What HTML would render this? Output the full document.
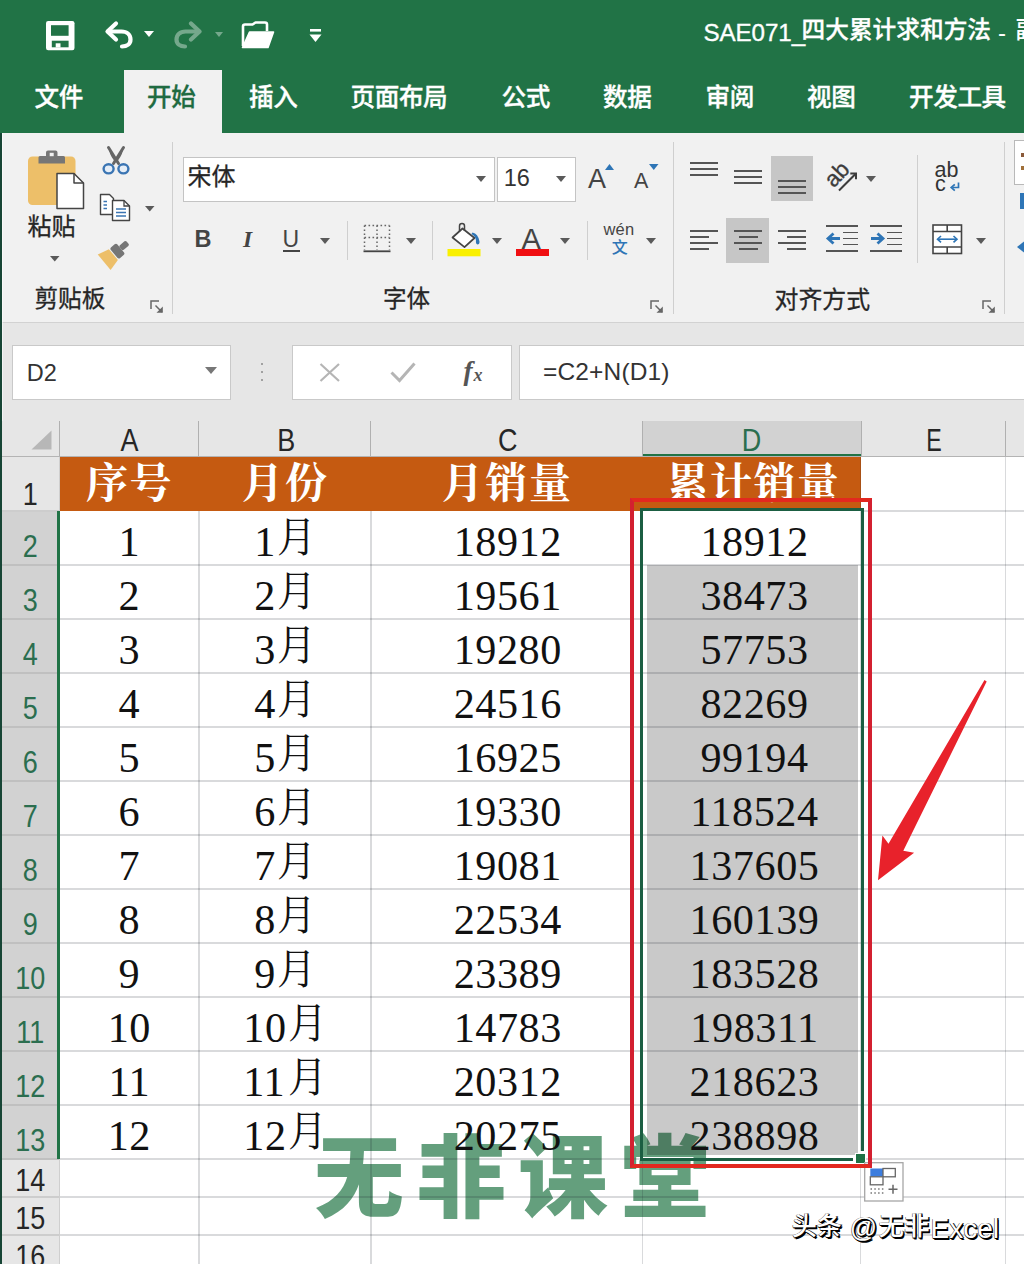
<!DOCTYPE html>
<html lang="zh-CN"><head><meta charset="utf-8"><title>SAE071_四大累计求和方法 - Excel</title>
<style>
html,body{margin:0;padding:0}
html{width:1024px;height:1264px;overflow:hidden}
body{width:1024px;height:1264px;overflow:hidden;background:#fff;font-family:"Liberation Sans",sans-serif}
#app{position:relative;width:1024px;height:1264px;overflow:hidden;background:#fff}
.b,.t,.ic,.cj,.sr{position:absolute;display:block}
.t{white-space:nowrap}
.cj,.ic{overflow:visible}
.sr{color:transparent;overflow:hidden;white-space:nowrap;font-family:"Liberation Sans",sans-serif;line-height:1;pointer-events:none}
.zs{font-family:"Liberation Sans","Noto Sans CJK SC",sans-serif}
.zf{font-family:"Liberation Serif","Noto Serif CJK SC",serif}
</style></head>
<body>
<div id="app">
<!-- title bar -->
<div class="b" style="left:0.00px;top:0.00px;width:1024.00px;height:133.00px;background:#217346;"></div>
<svg class="ic" style="left:45.80px;top:20.70px;width:28.50px;height:29.30px;" viewBox="0 0 28.5 29.3"><rect x="0" y="0" width="28.500" height="29.300" rx="2.200" fill="#fff"/><rect x="5" y="4.200" width="17.600" height="10.600" fill="#217346"/><rect x="5.800" y="19.700" width="16.800" height="6.600" fill="#217346"/><rect x="9.700" y="22.300" width="4.800" height="4.200" fill="#fff"/></svg>
<svg class="ic" style="left:103.00px;top:20.00px;width:31.00px;height:29.00px;" viewBox="0 0 31 29"><path d="M5 11.5H18.5C24 11.5 27.5 15 27.5 19.5C27.5 24 24 26.5 19 26.5" fill="none" stroke="#fff" stroke-width="4.2" stroke-linecap="round"/><path d="M13 3.5L4.5 11.5L13 19.5" fill="none" stroke="#fff" stroke-width="4.2" stroke-linecap="round" stroke-linejoin="round"/></svg>
<svg class="ic" style="left:144.00px;top:31.00px;width:10.00px;height:6.00px;" viewBox="0 0 10 6"><path d="M0 0H10 L5 6Z" fill="#fff"/></svg>
<svg class="ic" style="left:173.00px;top:20.00px;width:31.00px;height:29.00px;opacity:.38" viewBox="0 0 31 29"><path d="M26 11.5H12.5C7 11.5 3.5 15 3.5 19.5C3.5 24 7 26.5 12 26.5" fill="none" stroke="#fff" stroke-width="4.2" stroke-linecap="round"/><path d="M18 3.5L26.5 11.5L18 19.5" fill="none" stroke="#fff" stroke-width="4.2" stroke-linecap="round" stroke-linejoin="round"/></svg>
<svg class="ic" style="left:214.50px;top:31.50px;width:8.00px;height:5.00px;" viewBox="0 0 8 5"><path d="M0 0H8 L4 5Z" fill="rgba(255,255,255,.38)"/></svg>
<svg class="ic" style="left:241.00px;top:21.00px;width:34.00px;height:28.00px;" viewBox="0 0 34 28"><path d="M2 25V5.5Q2 3.5 4 3.5H11.5L14.5 1.5H24Q26 1.5 26 3.5V10" fill="none" stroke="#fff" stroke-width="2.6" stroke-linejoin="round"/><path d="M1.5 26.5L8.5 11H32.5L27 26.5Z" fill="#fff" stroke="#fff" stroke-width="1.6" stroke-linejoin="round"/></svg>
<svg class="ic" style="left:309.00px;top:28.00px;width:13.00px;height:15.00px;" viewBox="0 0 13 15"><rect x="1" y="1" width="11" height="2.6" fill="#fff"/><path d="M0.5 6.5H12.5L6.5 14Z" fill="#fff"/></svg>
<span class="t" style="left:703.50px;top:20.50px;font:normal normal 24.20px/24.20px 'Liberation Sans';color:#fff;letter-spacing:-0.10px;-webkit-text-stroke:0.350px #fff">SAE071_</span>
<span class="t zs" style="left:801.50px;top:18.70px;font-size:23.70px;line-height:23.70px;font-weight:500;color:#fff;-webkit-text-stroke:0.30px #fff">四大累计求和方法</span>
<span class="t" style="left:998.00px;top:20.50px;font:normal normal 24.00px/24.00px 'Liberation Sans';color:#fff;letter-spacing:0.00px;">-</span>
<span class="t zs" style="left:1015.50px;top:18.70px;font-size:23.70px;line-height:23.70px;font-weight:500;color:#fff">副本</span>
<!-- ribbon tabs -->
<div class="b" style="left:124.00px;top:70.00px;width:98.00px;height:64.00px;background:#f1f1f1;"></div>
<span class="t zs" style="left:34.50px;top:85.50px;font-size:24.60px;line-height:24.60px;font-weight:500;letter-spacing:-0.40px;color:#fff;-webkit-text-stroke:0.35px #fff">文件</span>
<span class="t zs" style="left:249.00px;top:85.50px;font-size:24.60px;line-height:24.60px;font-weight:500;letter-spacing:-0.40px;color:#fff;-webkit-text-stroke:0.35px #fff">插入</span>
<span class="t zs" style="left:350.50px;top:85.50px;font-size:24.60px;line-height:24.60px;font-weight:500;letter-spacing:-0.40px;color:#fff;-webkit-text-stroke:0.35px #fff">页面布局</span>
<span class="t zs" style="left:501.50px;top:85.50px;font-size:24.60px;line-height:24.60px;font-weight:500;letter-spacing:-0.40px;color:#fff;-webkit-text-stroke:0.35px #fff">公式</span>
<span class="t zs" style="left:603.00px;top:85.50px;font-size:24.60px;line-height:24.60px;font-weight:500;letter-spacing:-0.40px;color:#fff;-webkit-text-stroke:0.35px #fff">数据</span>
<span class="t zs" style="left:705.50px;top:85.50px;font-size:24.60px;line-height:24.60px;font-weight:500;letter-spacing:-0.40px;color:#fff;-webkit-text-stroke:0.35px #fff">审阅</span>
<span class="t zs" style="left:807.00px;top:85.50px;font-size:24.60px;line-height:24.60px;font-weight:500;letter-spacing:-0.40px;color:#fff;-webkit-text-stroke:0.35px #fff">视图</span>
<span class="t zs" style="left:909.00px;top:85.50px;font-size:24.60px;line-height:24.60px;font-weight:500;letter-spacing:-0.40px;color:#fff;-webkit-text-stroke:0.35px #fff">开发工具</span>
<span class="t zs" style="left:147.00px;top:85.50px;font-size:24.60px;line-height:24.60px;font-weight:500;letter-spacing:-0.40px;color:#1f6b41;-webkit-text-stroke:0.30px #1f6b41">开始</span>
<!-- ribbon -->
<div class="b" style="left:0.00px;top:133.00px;width:1024.00px;height:189.00px;background:#f1f1f1;"></div>
<div class="b" style="left:0.00px;top:321.50px;width:1024.00px;height:1.50px;background:#d2d2d2;"></div>
<div class="b" style="left:172.00px;top:142.00px;width:1.30px;height:172.00px;background:#cfcfcf;"></div>
<div class="b" style="left:673.00px;top:142.00px;width:1.30px;height:172.00px;background:#cfcfcf;"></div>
<div class="b" style="left:1004.00px;top:142.00px;width:1.30px;height:172.00px;background:#cfcfcf;"></div>
<div class="b" style="left:347.00px;top:221.00px;width:1.30px;height:39.00px;background:#cfcfcf;"></div>
<div class="b" style="left:432.00px;top:221.00px;width:1.30px;height:39.00px;background:#cfcfcf;"></div>
<div class="b" style="left:587.00px;top:221.00px;width:1.30px;height:39.00px;background:#cfcfcf;"></div>
<div class="b" style="left:916.50px;top:155.00px;width:1.30px;height:108.00px;background:#cfcfcf;"></div>
<svg class="ic" style="left:26.00px;top:148.00px;width:60.00px;height:63.00px;" viewBox="0 0 60 63"><rect x="2" y="8.5" width="47.5" height="48.5" rx="4.5" fill="#edbf69"/><path d="M12.5 15.5V9.5Q12.5 8 14 8H20V4.5Q20 2.5 22 2.5H29.5Q31.5 2.5 31.5 4.5V8H37.5Q39 8 39 9.5V15.5Z" fill="#767676"/><rect x="23.7" y="4.8" width="4" height="3.4" fill="#f1f1f1"/><path d="M31 25.5H48L57.5 35V60.5H31Z" fill="#fff" stroke="#444" stroke-width="1.5" stroke-linejoin="round"/><path d="M48 25.5V35H57.5" fill="none" stroke="#444" stroke-width="1.5" stroke-linejoin="round"/></svg>
<span class="t zs" style="left:27.50px;top:215.30px;font-size:24.00px;line-height:24.00px;font-weight:400;color:#262626;-webkit-text-stroke:0.28px #262626">粘贴</span>
<svg class="ic" style="left:50.30px;top:256.00px;width:9.50px;height:5.60px;" viewBox="0 0 9.5 5.6"><path d="M0 0H9.5 L4.75 5.6Z" fill="#5a5a5a"/></svg>
<svg class="ic" style="left:101.00px;top:145.00px;width:30.00px;height:31.00px;" viewBox="0 0 30 31"><path d="M7.5 2.5L17.5 18.5M22.5 2.5L12.5 18.5" stroke="#666" stroke-width="3" stroke-linecap="round" fill="none"/><path d="M8.2 3L15 14L21.8 3Q22.5 8 17 15.5H13Q7.5 8 8.200 3Z" fill="#666"/><ellipse cx="7.6" cy="23.8" rx="5" ry="4.6" fill="#e6eef7" stroke="#3b75b3" stroke-width="2.4"/><ellipse cx="22.4" cy="23.8" rx="5" ry="4.6" fill="#e6eef7" stroke="#3b75b3" stroke-width="2.4"/></svg>
<svg class="ic" style="left:99.00px;top:193.00px;width:33.00px;height:29.00px;" viewBox="0 0 33 29"><path d="M1.5 1.5H10.500L14.500 5.5V21.5H1.500Z" fill="#fff" stroke="#444" stroke-width="1.4" stroke-linejoin="round"/><path d="M4.5 8.5H8M4.5 12H8M4.5 15.5H8" stroke="#3b75b3" stroke-width="1.3"/><path d="M13.500 7.500H25L30.500 13V27.500H13.500Z" fill="#fff" stroke="#444" stroke-width="1.4" stroke-linejoin="round"/><path d="M25 7.5V13H30.5" fill="none" stroke="#444" stroke-width="1.3"/><path d="M17 16H27M17 19.5H27M17 23H27" stroke="#3b75b3" stroke-width="1.3"/></svg>
<svg class="ic" style="left:144.50px;top:206.00px;width:9.50px;height:5.60px;" viewBox="0 0 9.5 5.6"><path d="M0 0H9.5 L4.75 5.6Z" fill="#5a5a5a"/></svg>
<svg class="ic" style="left:100.00px;top:238.00px;width:33.00px;height:31.00px;" viewBox="0 0 33 31"><g transform="rotate(-40 16 15)"><rect x="22.500" y="11.5" width="9" height="6" rx="1.5" fill="#767676"/><rect x="14" y="7.5" width="8.500" height="14" rx="2" fill="#767676"/><path d="M13 7.5V21.5L1 24.500V4.500Z" fill="#edbf69"/></g></svg>
<span class="t zs" style="left:34.50px;top:287.70px;font-size:23.60px;line-height:23.60px;font-weight:400;color:#262626;-webkit-text-stroke:0.28px #262626">剪贴板</span>
<svg class="ic" style="left:150.00px;top:300.00px;width:14.00px;height:14.00px;" viewBox="0 0 14 14"><path d="M1 9V1H9" fill="none" stroke="#666" stroke-width="1.5"/><path d="M5.500 5.500L12 12" stroke="#666" stroke-width="1.5"/><path d="M12.800 6.500V12.800H6.500Z" fill="#666"/></svg>
<div class="b" style="left:182.50px;top:156.50px;width:312.00px;height:45.00px;background:#fff;box-sizing:border-box;border:1.3px solid #c4c4c4"></div>
<span class="t zs" style="left:187.50px;top:165.40px;font-size:24.00px;line-height:24.00px;font-weight:400;color:#262626;-webkit-text-stroke:0.28px #262626">宋体</span>
<svg class="ic" style="left:476.00px;top:176.20px;width:10.00px;height:6.00px;" viewBox="0 0 10 6"><path d="M0 0H10 L5 6Z" fill="#5a5a5a"/></svg>
<div class="b" style="left:497.00px;top:156.50px;width:78.50px;height:45.00px;background:#fff;box-sizing:border-box;border:1.3px solid #c4c4c4"></div>
<span class="t" style="left:503.80px;top:166.80px;font:normal normal 23.50px/23.50px 'Liberation Sans';color:#333;letter-spacing:0.00px;">16</span>
<svg class="ic" style="left:556.00px;top:176.20px;width:10.00px;height:6.00px;" viewBox="0 0 10 6"><path d="M0 0H10 L5 6Z" fill="#5a5a5a"/></svg>
<span class="t" style="left:588.00px;top:165.50px;font:normal normal 27.00px/27.00px 'Liberation Sans';color:#444;letter-spacing:0.00px;">A</span>
<svg class="ic" style="left:604.50px;top:163.50px;width:9.00px;height:6.00px;" viewBox="0 0 9 6"><path d="M0 6H9L4.500 0Z" fill="#2e75b6"/></svg>
<span class="t" style="left:634.00px;top:170.50px;font:normal normal 21.50px/21.50px 'Liberation Sans';color:#444;letter-spacing:0.00px;">A</span>
<svg class="ic" style="left:648.50px;top:163.50px;width:9.50px;height:6.00px;" viewBox="0 0 9.5 6"><path d="M0 0H9.500L4.750 6Z" fill="#2e75b6"/></svg>
<span class="t" style="left:194.50px;top:227.50px;font:normal bold 23.50px/23.50px 'Liberation Sans';color:#444;letter-spacing:0.00px;">B</span>
<span class="t" style="left:243.00px;top:227.50px;font:italic bold 23.50px/23.50px 'Liberation Serif';color:#444;letter-spacing:0.00px;">I</span>
<span class="t" style="left:282.50px;top:227.50px;font:normal normal 23.00px/23.00px 'Liberation Sans';color:#444;letter-spacing:0.00px;">U</span>
<div class="b" style="left:282.50px;top:249.70px;width:17.00px;height:2.30px;background:#444;"></div>
<svg class="ic" style="left:320.00px;top:238.00px;width:10.00px;height:6.00px;" viewBox="0 0 10 6"><path d="M0 0H10 L5 6Z" fill="#5a5a5a"/></svg>
<svg class="ic" style="left:363.00px;top:224.00px;width:28.00px;height:29.00px;" viewBox="0 0 28 29"><path d="M1.500 1.500H26.500M1.500 13.500H26.500M1.500 1.500V26M14 1.500V26M26.500 1.500V26" stroke="#666" stroke-width="1.500" stroke-dasharray="1.600 2.400" fill="none"/><path d="M0.500 27.300H27.500" stroke="#444" stroke-width="1.800"/></svg>
<svg class="ic" style="left:406.00px;top:238.00px;width:10.00px;height:6.00px;" viewBox="0 0 10 6"><path d="M0 0H10 L5 6Z" fill="#5a5a5a"/></svg>
<svg class="ic" style="left:447.00px;top:222.00px;width:35.00px;height:36.00px;" viewBox="0 0 35 36"><rect x="0.500" y="27" width="33" height="7.300" fill="#f9f000"/><path d="M15.500 6.500L27.500 16L17.500 25.200L5.500 15.500Z" fill="#fff" stroke="#444" stroke-width="1.700" stroke-linejoin="round"/><path d="M12.500 9.500V4Q12.500 1.500 15 1.500Q17.500 1.500 17.500 4V9" fill="none" stroke="#444" stroke-width="1.500"/><path d="M25.500 10.500Q31 11.500 32.500 19.500Q32.700 22.500 30.500 22.500Q28.500 22 29 18.500Q28.500 14 24.500 12Z" fill="#2e75b6"/></svg>
<svg class="ic" style="left:492.00px;top:238.00px;width:10.00px;height:6.00px;" viewBox="0 0 10 6"><path d="M0 0H10 L5 6Z" fill="#5a5a5a"/></svg>
<span class="t" style="left:521.50px;top:224.50px;font:normal normal 29.00px/29.00px 'Liberation Sans';color:#444;letter-spacing:0.00px;">A</span>
<div class="b" style="left:516.00px;top:249.00px;width:32.50px;height:6.50px;background:#f00f12;"></div>
<svg class="ic" style="left:560.00px;top:238.00px;width:10.00px;height:6.00px;" viewBox="0 0 10 6"><path d="M0 0H10 L5 6Z" fill="#5a5a5a"/></svg>
<span class="t" style="left:603.50px;top:221.00px;font:normal normal 16.50px/16.50px 'Liberation Sans';color:#444;letter-spacing:0.20px;">wén</span>
<span class="t zs" style="left:611.80px;top:240.10px;font-size:16.00px;line-height:16.00px;font-weight:500;color:#2e75b6">文</span>
<svg class="ic" style="left:646.00px;top:238.00px;width:10.00px;height:6.00px;" viewBox="0 0 10 6"><path d="M0 0H10 L5 6Z" fill="#5a5a5a"/></svg>
<span class="t zs" style="left:383.00px;top:287.70px;font-size:23.60px;line-height:23.60px;font-weight:400;color:#262626;-webkit-text-stroke:0.28px #262626">字体</span>
<svg class="ic" style="left:650.00px;top:300.00px;width:14.00px;height:14.00px;" viewBox="0 0 14 14"><path d="M1 9V1H9" fill="none" stroke="#666" stroke-width="1.5"/><path d="M5.500 5.500L12 12" stroke="#666" stroke-width="1.5"/><path d="M12.800 6.500V12.800H6.500Z" fill="#666"/></svg>
<div class="b" style="left:690.00px;top:162.00px;width:27.50px;height:1.60px;background:#555;"></div><div class="b" style="left:690.00px;top:168.00px;width:27.50px;height:1.60px;background:#555;"></div><div class="b" style="left:690.00px;top:174.00px;width:27.50px;height:1.60px;background:#555;"></div>
<div class="b" style="left:734.00px;top:170.00px;width:28.00px;height:1.60px;background:#555;"></div><div class="b" style="left:734.00px;top:176.00px;width:28.00px;height:1.60px;background:#555;"></div><div class="b" style="left:734.00px;top:182.00px;width:28.00px;height:1.60px;background:#555;"></div>
<div class="b" style="left:770.50px;top:156.00px;width:42.50px;height:45.00px;background:#c6c6c6;"></div>
<div class="b" style="left:778.00px;top:180.00px;width:28.00px;height:1.60px;background:#555;"></div><div class="b" style="left:778.00px;top:186.00px;width:28.00px;height:1.60px;background:#555;"></div><div class="b" style="left:778.00px;top:192.00px;width:28.00px;height:1.60px;background:#555;"></div>
<svg class="ic" style="left:820.00px;top:156.00px;width:44.00px;height:40.00px;" viewBox="0 0 44 40"><text text-anchor="middle" transform="translate(17.300 18.800) rotate(-47) translate(0 6.800)" font-family="Liberation Sans" font-size="22.500" fill="#3c3c3c" stroke="#3c3c3c" stroke-width="0.350">ab</text><path d="M19 34.500L35.200 18.300" stroke="#3c3c3c" stroke-width="2" fill="none"/><path d="M30.300 17.600H36V23.300" fill="none" stroke="#3c3c3c" stroke-width="2"/></svg>
<svg class="ic" style="left:866.00px;top:176.20px;width:10.00px;height:6.00px;" viewBox="0 0 10 6"><path d="M0 0H10 L5 6Z" fill="#5a5a5a"/></svg>
<div class="b" style="left:690.00px;top:230.00px;width:27.50px;height:1.60px;background:#555;"></div><div class="b" style="left:690.00px;top:236.00px;width:19.00px;height:1.60px;background:#555;"></div><div class="b" style="left:690.00px;top:242.00px;width:27.50px;height:1.60px;background:#555;"></div><div class="b" style="left:690.00px;top:248.00px;width:19.00px;height:1.60px;background:#555;"></div>
<div class="b" style="left:726.00px;top:218.00px;width:43.00px;height:45.00px;background:#c6c6c6;"></div>
<div class="b" style="left:734.00px;top:230.00px;width:28.00px;height:1.60px;background:#555;"></div><div class="b" style="left:739.00px;top:236.00px;width:18.50px;height:1.60px;background:#555;"></div><div class="b" style="left:734.00px;top:242.00px;width:28.00px;height:1.60px;background:#555;"></div><div class="b" style="left:739.00px;top:248.00px;width:18.50px;height:1.60px;background:#555;"></div>
<div class="b" style="left:778.00px;top:230.00px;width:28.00px;height:1.60px;background:#555;"></div><div class="b" style="left:787.00px;top:236.00px;width:19.00px;height:1.60px;background:#555;"></div><div class="b" style="left:778.00px;top:242.00px;width:28.00px;height:1.60px;background:#555;"></div><div class="b" style="left:787.00px;top:248.00px;width:19.00px;height:1.60px;background:#555;"></div>
<div class="b" style="left:826.00px;top:225.40px;width:31.50px;height:1.60px;background:#555;"></div><div class="b" style="left:842.50px;top:231.70px;width:15.00px;height:1.60px;background:#555;"></div><div class="b" style="left:842.50px;top:237.80px;width:15.00px;height:1.60px;background:#555;"></div><div class="b" style="left:842.50px;top:243.90px;width:15.00px;height:1.60px;background:#555;"></div><div class="b" style="left:826.00px;top:250.20px;width:31.50px;height:1.60px;background:#555;"></div>
<svg class="ic" style="left:825.50px;top:232.00px;width:15.00px;height:13.00px;" viewBox="0 0 15 13"><path d="M14 6.500H3.500M7.500 1.500L2 6.500L7.500 11.500" fill="none" stroke="#2e75b6" stroke-width="2.800"/></svg>
<div class="b" style="left:870.00px;top:225.40px;width:32.00px;height:1.60px;background:#555;"></div><div class="b" style="left:886.50px;top:231.70px;width:15.50px;height:1.60px;background:#555;"></div><div class="b" style="left:886.50px;top:237.80px;width:15.50px;height:1.60px;background:#555;"></div><div class="b" style="left:886.50px;top:243.90px;width:15.50px;height:1.60px;background:#555;"></div><div class="b" style="left:870.00px;top:250.20px;width:32.00px;height:1.60px;background:#555;"></div>
<svg class="ic" style="left:869.50px;top:232.00px;width:15.00px;height:13.00px;" viewBox="0 0 15 13"><path d="M1 6.500H11.500M7.500 1.500L13 6.500L7.500 11.500" fill="none" stroke="#2e75b6" stroke-width="2.800"/></svg>
<span class="t zs" style="left:774.50px;top:287.70px;font-size:23.90px;line-height:23.90px;font-weight:400;color:#262626;-webkit-text-stroke:0.28px #262626">对齐方式</span>
<span class="t" style="left:934.50px;top:160.30px;font:normal normal 21.50px/21.50px 'Liberation Sans';color:#333;letter-spacing:0.00px;">ab</span>
<span class="t" style="left:935.00px;top:174.00px;font:normal normal 21.50px/21.50px 'Liberation Sans';color:#333;letter-spacing:0.00px;">c</span>
<svg class="ic" style="left:949.50px;top:181.50px;width:10.00px;height:9.50px;" viewBox="0 0 10 9.5"><path d="M8.500 0.500V5.500H2.500" fill="none" stroke="#2e75b6" stroke-width="1.700"/><path d="M4.800 2.300L1.200 5.500L4.800 8.700" fill="none" stroke="#2e75b6" stroke-width="1.700"/></svg>
<svg class="ic" style="left:931.50px;top:223.50px;width:30.50px;height:30.50px;" viewBox="0 0 30.5 30.5"><rect x="1" y="1" width="28.500" height="28.500" fill="#fff" stroke="#444" stroke-width="1.600"/><path d="M1 7.500H29.500M1 23H29.500M15.200 1V7.500M15.200 23V29.500" stroke="#444" stroke-width="1.600" fill="none"/><path d="M6 15.200H24.500" stroke="#2e75b6" stroke-width="1.600"/><path d="M9 12L5.500 15.200L9 18.400M21.500 12L25 15.200L21.500 18.400" fill="none" stroke="#2e75b6" stroke-width="1.600"/></svg>
<svg class="ic" style="left:976.00px;top:238.30px;width:10.00px;height:6.00px;" viewBox="0 0 10 6"><path d="M0 0H10 L5 6Z" fill="#5a5a5a"/></svg>
<svg class="ic" style="left:982.00px;top:300.00px;width:14.00px;height:14.00px;" viewBox="0 0 14 14"><path d="M1 9V1H9" fill="none" stroke="#666" stroke-width="1.5"/><path d="M5.500 5.500L12 12" stroke="#666" stroke-width="1.5"/><path d="M12.800 6.500V12.800H6.500Z" fill="#666"/></svg>
<div class="b" style="left:1014.00px;top:140.00px;width:14.00px;height:45.00px;background:#fff;box-sizing:border-box;border:1.300px solid #b9b9b9"></div>
<div class="b" style="left:1021.00px;top:153.00px;width:3.00px;height:4.00px;background:#8a5a3a;"></div>
<div class="b" style="left:1021.00px;top:166.00px;width:3.00px;height:4.00px;background:#a0703a;"></div>
<div class="b" style="left:1020.00px;top:193.00px;width:4.00px;height:16.00px;background:#2e75b6;"></div>
<svg class="ic" style="left:1016.00px;top:241.00px;width:8.00px;height:12.00px;" viewBox="0 0 8 12"><path d="M8 0.500L1 6L8 11.500Z" fill="#2e75b6"/></svg>
<!-- formula bar -->
<div class="b" style="left:0.00px;top:323.00px;width:1024.00px;height:98.00px;background:#e6e6e6;"></div>
<div class="b" style="left:12.00px;top:345.00px;width:219.00px;height:54.50px;background:#fff;box-sizing:border-box;border:1.300px solid #c9c9c9"></div>
<span class="t" style="left:26.80px;top:362.00px;font:normal normal 23.50px/23.50px 'Liberation Sans';color:#333;letter-spacing:0.00px;">D2</span>
<svg class="ic" style="left:205.00px;top:366.50px;width:12.00px;height:7.00px;" viewBox="0 0 12 7"><path d="M0 0H12 L6 7Z" fill="#777"/></svg>
<div class="b" style="left:260.70px;top:362.70px;width:2.70px;height:2.70px;background:#8a8a8a;border-radius:50%"></div>
<div class="b" style="left:260.70px;top:370.70px;width:2.70px;height:2.70px;background:#8a8a8a;border-radius:50%"></div>
<div class="b" style="left:260.70px;top:378.70px;width:2.70px;height:2.70px;background:#8a8a8a;border-radius:50%"></div>
<div class="b" style="left:292.00px;top:345.00px;width:219.50px;height:54.50px;background:#fff;box-sizing:border-box;border:1.300px solid #c9c9c9"></div>
<svg class="ic" style="left:319.00px;top:362.50px;width:22.00px;height:19.00px;" viewBox="0 0 22 19"><path d="M1.500 1L20 18M20 1L1.500 18" stroke="#b5b5b5" stroke-width="2.200" fill="none"/></svg>
<svg class="ic" style="left:389.50px;top:362.00px;width:26.00px;height:21.00px;" viewBox="0 0 26 21"><path d="M1.500 10.500L9.500 18.500L24.500 1.500" stroke="#b5b5b5" stroke-width="3" fill="none"/></svg>
<span class="t" style="left:463.50px;top:357.00px;font:italic bold 27.50px/27.50px 'Liberation Serif';color:#555;letter-spacing:0.00px;">f</span>
<span class="t" style="left:473.50px;top:366.00px;font:italic bold 18.00px/18.00px 'Liberation Serif';color:#555;letter-spacing:0.00px;">x</span>
<div class="b" style="left:518.50px;top:345.00px;width:520.00px;height:54.50px;background:#fff;box-sizing:border-box;border:1.300px solid #c9c9c9"></div>
<span class="t" style="left:543.00px;top:359.80px;font:normal normal 24.50px/24.50px 'Liberation Sans';color:#333;letter-spacing:0.15px;">=C2+N(D1)</span>
<div class="b" style="left:0.00px;top:133.00px;width:1.70px;height:1140.00px;background:#174535;"></div>
<div class="b" style="left:1.70px;top:133.00px;width:1.00px;height:1140.00px;background:rgba(255,255,255,.55);"></div>
<!-- column headers -->
<div class="b" style="left:2.00px;top:421.00px;width:1022.00px;height:36.00px;background:#e6e6e6;"></div>
<div class="b" style="left:642.00px;top:421.00px;width:219.00px;height:33.00px;background:#d2d2d2;"></div>
<div class="b" style="left:642.00px;top:453.50px;width:219.00px;height:3.00px;background:#217346;"></div>
<div class="b" style="left:2.00px;top:455.80px;width:1022.00px;height:1.30px;background:#b4b4b4;"></div>
<div class="b" style="left:58.50px;top:420.50px;width:1.40px;height:35.50px;background:#b0b0b0;"></div>
<div class="b" style="left:198.00px;top:420.50px;width:1.40px;height:35.50px;background:#b0b0b0;"></div>
<div class="b" style="left:370.00px;top:420.50px;width:1.40px;height:35.50px;background:#b0b0b0;"></div>
<div class="b" style="left:641.50px;top:420.50px;width:1.40px;height:35.50px;background:#b0b0b0;"></div>
<div class="b" style="left:860.50px;top:420.50px;width:1.40px;height:35.50px;background:#b0b0b0;"></div>
<div class="b" style="left:1004.50px;top:420.50px;width:1.40px;height:35.50px;background:#b0b0b0;"></div>
<svg class="ic" style="left:31.00px;top:430.00px;width:21.00px;height:20.00px;" viewBox="0 0 21 20"><path d="M20.500 0.500V19.500H0.500Z" fill="#b7b7b7"/></svg>
<span class="t" style="left:99.60px;top:429.66px;font:normal normal 27.00px/27.00px 'Liberation Sans';color:#262626;letter-spacing:0.00px;width:60px;text-align:center;transform:scale(1,1.15);transform-origin:50% 100%">A</span>
<span class="t" style="left:256.30px;top:429.66px;font:normal normal 27.00px/27.00px 'Liberation Sans';color:#262626;letter-spacing:0.00px;width:60px;text-align:center;transform:scale(1,1.15);transform-origin:50% 100%">B</span>
<span class="t" style="left:477.80px;top:429.66px;font:normal normal 27.00px/27.00px 'Liberation Sans';color:#262626;letter-spacing:0.00px;width:60px;text-align:center;transform:scale(1,1.15);transform-origin:50% 100%">C</span>
<span class="t" style="left:904.30px;top:429.66px;font:normal normal 27.00px/27.00px 'Liberation Sans';color:#262626;letter-spacing:0.00px;width:60px;text-align:center;transform:scale(0.86,1.15);transform-origin:50% 100%">E</span>
<span class="t" style="left:721.50px;top:429.66px;font:normal normal 27.00px/27.00px 'Liberation Sans';color:#2b6e4f;letter-spacing:0.00px;width:60px;text-align:center;transform:scale(1,1.15);transform-origin:50% 100%">D</span>
<!-- cells -->
<div class="b" style="left:59.00px;top:457.00px;width:965.00px;height:820.00px;background:#fff;"></div>
<div class="b" style="left:59.00px;top:457.00px;width:802.00px;height:54.00px;background:#c55a11;"></div>
<!-- watermark -->
<span class="t zs" style="left:314.00px;top:1134.00px;font-size:90px;line-height:90px;font-weight:900;letter-spacing:12px;color:#649f7d">无非课堂</span>
<div class="b" style="left:647.00px;top:564.50px;width:211.00px;height:590.00px;background:rgba(0,0,0,.212);"></div>
<div class="b" style="left:59.00px;top:564.20px;width:965.00px;height:1.40px;background:rgba(25,30,45,.165);"></div>
<div class="b" style="left:59.00px;top:618.20px;width:965.00px;height:1.40px;background:rgba(25,30,45,.165);"></div>
<div class="b" style="left:59.00px;top:672.20px;width:965.00px;height:1.40px;background:rgba(25,30,45,.165);"></div>
<div class="b" style="left:59.00px;top:726.20px;width:965.00px;height:1.40px;background:rgba(25,30,45,.165);"></div>
<div class="b" style="left:59.00px;top:780.20px;width:965.00px;height:1.40px;background:rgba(25,30,45,.165);"></div>
<div class="b" style="left:59.00px;top:834.20px;width:965.00px;height:1.40px;background:rgba(25,30,45,.165);"></div>
<div class="b" style="left:59.00px;top:888.20px;width:965.00px;height:1.40px;background:rgba(25,30,45,.165);"></div>
<div class="b" style="left:59.00px;top:942.20px;width:965.00px;height:1.40px;background:rgba(25,30,45,.165);"></div>
<div class="b" style="left:59.00px;top:996.20px;width:965.00px;height:1.40px;background:rgba(25,30,45,.165);"></div>
<div class="b" style="left:59.00px;top:1050.20px;width:965.00px;height:1.40px;background:rgba(25,30,45,.165);"></div>
<div class="b" style="left:59.00px;top:1104.20px;width:965.00px;height:1.40px;background:rgba(25,30,45,.165);"></div>
<div class="b" style="left:59.00px;top:1158.20px;width:965.00px;height:1.40px;background:rgba(25,30,45,.165);"></div>
<div class="b" style="left:59.00px;top:1196.20px;width:965.00px;height:1.40px;background:rgba(25,30,45,.165);"></div>
<div class="b" style="left:59.00px;top:1234.20px;width:965.00px;height:1.40px;background:rgba(25,30,45,.165);"></div>
<div class="b" style="left:59.00px;top:1272.20px;width:965.00px;height:1.40px;background:rgba(25,30,45,.165);"></div>
<div class="b" style="left:198.30px;top:511.00px;width:1.40px;height:760.00px;background:rgba(25,30,45,.165);"></div>
<div class="b" style="left:370.30px;top:511.00px;width:1.40px;height:760.00px;background:rgba(25,30,45,.165);"></div>
<div class="b" style="left:641.90px;top:511.00px;width:1.40px;height:760.00px;background:rgba(25,30,45,.165);"></div>
<div class="b" style="left:859.90px;top:511.00px;width:1.40px;height:760.00px;background:rgba(25,30,45,.165);"></div>
<div class="b" style="left:1004.50px;top:511.00px;width:1.40px;height:760.00px;background:rgba(25,30,45,.165);"></div>
<div class="b" style="left:859.90px;top:457.00px;width:1.40px;height:54.00px;background:rgba(25,30,45,.165);"></div>
<div class="b" style="left:1004.50px;top:457.00px;width:1.40px;height:54.00px;background:rgba(25,30,45,.165);"></div>
<div class="b" style="left:861.00px;top:510.20px;width:163.00px;height:1.40px;background:rgba(25,30,45,.165);"></div>
<!-- row headers -->
<div class="b" style="left:2.00px;top:457.00px;width:57.00px;height:820.00px;background:#e6e6e6;"></div>
<div class="b" style="left:2.00px;top:511.00px;width:57.00px;height:648.00px;background:#d2d2d2;"></div>
<div class="b" style="left:2.00px;top:510.20px;width:57.00px;height:1.40px;background:#cdcdcd;"></div>
<div class="b" style="left:2.00px;top:564.20px;width:57.00px;height:1.40px;background:#c0c0c0;"></div>
<div class="b" style="left:2.00px;top:618.20px;width:57.00px;height:1.40px;background:#c0c0c0;"></div>
<div class="b" style="left:2.00px;top:672.20px;width:57.00px;height:1.40px;background:#c0c0c0;"></div>
<div class="b" style="left:2.00px;top:726.20px;width:57.00px;height:1.40px;background:#c0c0c0;"></div>
<div class="b" style="left:2.00px;top:780.20px;width:57.00px;height:1.40px;background:#c0c0c0;"></div>
<div class="b" style="left:2.00px;top:834.20px;width:57.00px;height:1.40px;background:#c0c0c0;"></div>
<div class="b" style="left:2.00px;top:888.20px;width:57.00px;height:1.40px;background:#c0c0c0;"></div>
<div class="b" style="left:2.00px;top:942.20px;width:57.00px;height:1.40px;background:#c0c0c0;"></div>
<div class="b" style="left:2.00px;top:996.20px;width:57.00px;height:1.40px;background:#c0c0c0;"></div>
<div class="b" style="left:2.00px;top:1050.20px;width:57.00px;height:1.40px;background:#c0c0c0;"></div>
<div class="b" style="left:2.00px;top:1104.20px;width:57.00px;height:1.40px;background:#c0c0c0;"></div>
<div class="b" style="left:2.00px;top:1158.20px;width:57.00px;height:1.40px;background:#c0c0c0;"></div>
<div class="b" style="left:2.00px;top:1196.20px;width:57.00px;height:1.40px;background:#cdcdcd;"></div>
<div class="b" style="left:2.00px;top:1234.20px;width:57.00px;height:1.40px;background:#cdcdcd;"></div>
<div class="b" style="left:2.00px;top:1272.20px;width:57.00px;height:1.40px;background:#cdcdcd;"></div>
<div class="b" style="left:58.50px;top:457.00px;width:1.00px;height:54.00px;background:#cfcfcf;"></div>
<div class="b" style="left:58.50px;top:1159.00px;width:1.00px;height:110.00px;background:#cfcfcf;"></div>
<div class="b" style="left:57.00px;top:511.00px;width:2.80px;height:648.00px;background:#217346;"></div>
<span class="t" style="left:0.30px;top:483.96px;font:normal normal 27.00px/27.00px 'Liberation Sans';color:#262626;letter-spacing:0.00px;width:60px;text-align:center;transform:scale(1,1.15);transform-origin:50% 100%">1</span>
<span class="t" style="left:0.30px;top:535.86px;font:normal normal 27.00px/27.00px 'Liberation Sans';color:#2b6e4f;letter-spacing:0.00px;width:60px;text-align:center;transform:scale(1,1.15);transform-origin:50% 100%">2</span>
<span class="t" style="left:0.30px;top:589.86px;font:normal normal 27.00px/27.00px 'Liberation Sans';color:#2b6e4f;letter-spacing:0.00px;width:60px;text-align:center;transform:scale(1,1.15);transform-origin:50% 100%">3</span>
<span class="t" style="left:0.30px;top:643.86px;font:normal normal 27.00px/27.00px 'Liberation Sans';color:#2b6e4f;letter-spacing:0.00px;width:60px;text-align:center;transform:scale(1,1.15);transform-origin:50% 100%">4</span>
<span class="t" style="left:0.30px;top:697.86px;font:normal normal 27.00px/27.00px 'Liberation Sans';color:#2b6e4f;letter-spacing:0.00px;width:60px;text-align:center;transform:scale(1,1.15);transform-origin:50% 100%">5</span>
<span class="t" style="left:0.30px;top:751.86px;font:normal normal 27.00px/27.00px 'Liberation Sans';color:#2b6e4f;letter-spacing:0.00px;width:60px;text-align:center;transform:scale(1,1.15);transform-origin:50% 100%">6</span>
<span class="t" style="left:0.30px;top:805.86px;font:normal normal 27.00px/27.00px 'Liberation Sans';color:#2b6e4f;letter-spacing:0.00px;width:60px;text-align:center;transform:scale(1,1.15);transform-origin:50% 100%">7</span>
<span class="t" style="left:0.30px;top:859.86px;font:normal normal 27.00px/27.00px 'Liberation Sans';color:#2b6e4f;letter-spacing:0.00px;width:60px;text-align:center;transform:scale(1,1.15);transform-origin:50% 100%">8</span>
<span class="t" style="left:0.30px;top:913.86px;font:normal normal 27.00px/27.00px 'Liberation Sans';color:#2b6e4f;letter-spacing:0.00px;width:60px;text-align:center;transform:scale(1,1.15);transform-origin:50% 100%">9</span>
<span class="t" style="left:0.30px;top:967.86px;font:normal normal 27.00px/27.00px 'Liberation Sans';color:#2b6e4f;letter-spacing:0.00px;width:60px;text-align:center;transform:scale(1,1.15);transform-origin:50% 100%">10</span>
<span class="t" style="left:0.30px;top:1021.86px;font:normal normal 27.00px/27.00px 'Liberation Sans';color:#2b6e4f;letter-spacing:0.00px;width:60px;text-align:center;transform:scale(1,1.15);transform-origin:50% 100%">11</span>
<span class="t" style="left:0.30px;top:1075.86px;font:normal normal 27.00px/27.00px 'Liberation Sans';color:#2b6e4f;letter-spacing:0.00px;width:60px;text-align:center;transform:scale(1,1.15);transform-origin:50% 100%">12</span>
<span class="t" style="left:0.30px;top:1129.86px;font:normal normal 27.00px/27.00px 'Liberation Sans';color:#2b6e4f;letter-spacing:0.00px;width:60px;text-align:center;transform:scale(1,1.15);transform-origin:50% 100%">13</span>
<span class="t" style="left:0.30px;top:1169.76px;font:normal normal 27.00px/27.00px 'Liberation Sans';color:#262626;letter-spacing:0.00px;width:60px;text-align:center;transform:scale(1,1.15);transform-origin:50% 100%">14</span>
<span class="t" style="left:0.30px;top:1207.76px;font:normal normal 27.00px/27.00px 'Liberation Sans';color:#262626;letter-spacing:0.00px;width:60px;text-align:center;transform:scale(1,1.15);transform-origin:50% 100%">15</span>
<span class="t" style="left:0.30px;top:1245.76px;font:normal normal 27.00px/27.00px 'Liberation Sans';color:#262626;letter-spacing:0.00px;width:60px;text-align:center;transform:scale(1,1.15);transform-origin:50% 100%">16</span>
<!-- table -->
<span class="t zf" style="left:86.00px;top:462.80px;font-size:42.00px;line-height:42.00px;font-weight:bold;letter-spacing:1.50px;color:#fff">序号</span>
<span class="t zf" style="left:241.50px;top:462.80px;font-size:42.00px;line-height:42.00px;font-weight:bold;letter-spacing:1.50px;color:#fff">月份</span>
<span class="t zf" style="left:441.50px;top:462.80px;font-size:42.00px;line-height:42.00px;font-weight:bold;letter-spacing:1.70px;color:#fff">月销量</span>
<span class="t zf" style="left:666.50px;top:462.80px;font-size:42.00px;line-height:42.00px;font-weight:bold;letter-spacing:1.50px;color:#fff">累计销量</span>
<span class="t" style="left:29.30px;top:518.26px;font:normal normal 42.20px/42.20px 'Liberation Serif';color:#111;letter-spacing:0.55px;width:200px;text-align:center;line-height:48.49px">1</span>
<span class="t" style="left:254.18px;top:518.26px;font:normal normal 42.20px/42.20px 'Liberation Serif';color:#111;letter-spacing:0.55px;line-height:48.49px">1</span>
<span class="t zf" style="left:277.12px;top:517.05px;font-size:42.00px;line-height:42.00px;font-weight:400;color:#111;transform:scale(0.931,1);transform-origin:0 0">月</span>
<span class="t" style="left:407.80px;top:518.26px;font:normal normal 42.20px/42.20px 'Liberation Serif';color:#111;letter-spacing:0.55px;width:200px;text-align:center;line-height:48.49px">18912</span>
<span class="t" style="left:654.50px;top:518.26px;font:normal normal 42.20px/42.20px 'Liberation Serif';color:#111;letter-spacing:0.55px;width:200px;text-align:center;line-height:48.49px">18912</span>
<span class="t" style="left:29.30px;top:572.26px;font:normal normal 42.20px/42.20px 'Liberation Serif';color:#111;letter-spacing:0.55px;width:200px;text-align:center;line-height:48.49px">2</span>
<span class="t" style="left:254.18px;top:572.26px;font:normal normal 42.20px/42.20px 'Liberation Serif';color:#111;letter-spacing:0.55px;line-height:48.49px">2</span>
<span class="t zf" style="left:277.12px;top:571.05px;font-size:42.00px;line-height:42.00px;font-weight:400;color:#111;transform:scale(0.931,1);transform-origin:0 0">月</span>
<span class="t" style="left:407.80px;top:572.26px;font:normal normal 42.20px/42.20px 'Liberation Serif';color:#111;letter-spacing:0.55px;width:200px;text-align:center;line-height:48.49px">19561</span>
<span class="t" style="left:654.50px;top:572.26px;font:normal normal 42.20px/42.20px 'Liberation Serif';color:#111;letter-spacing:0.55px;width:200px;text-align:center;line-height:48.49px">38473</span>
<span class="t" style="left:29.30px;top:626.26px;font:normal normal 42.20px/42.20px 'Liberation Serif';color:#111;letter-spacing:0.55px;width:200px;text-align:center;line-height:48.49px">3</span>
<span class="t" style="left:254.18px;top:626.26px;font:normal normal 42.20px/42.20px 'Liberation Serif';color:#111;letter-spacing:0.55px;line-height:48.49px">3</span>
<span class="t zf" style="left:277.12px;top:625.05px;font-size:42.00px;line-height:42.00px;font-weight:400;color:#111;transform:scale(0.931,1);transform-origin:0 0">月</span>
<span class="t" style="left:407.80px;top:626.26px;font:normal normal 42.20px/42.20px 'Liberation Serif';color:#111;letter-spacing:0.55px;width:200px;text-align:center;line-height:48.49px">19280</span>
<span class="t" style="left:654.50px;top:626.26px;font:normal normal 42.20px/42.20px 'Liberation Serif';color:#111;letter-spacing:0.55px;width:200px;text-align:center;line-height:48.49px">57753</span>
<span class="t" style="left:29.30px;top:680.26px;font:normal normal 42.20px/42.20px 'Liberation Serif';color:#111;letter-spacing:0.55px;width:200px;text-align:center;line-height:48.49px">4</span>
<span class="t" style="left:254.18px;top:680.26px;font:normal normal 42.20px/42.20px 'Liberation Serif';color:#111;letter-spacing:0.55px;line-height:48.49px">4</span>
<span class="t zf" style="left:277.12px;top:679.05px;font-size:42.00px;line-height:42.00px;font-weight:400;color:#111;transform:scale(0.931,1);transform-origin:0 0">月</span>
<span class="t" style="left:407.80px;top:680.26px;font:normal normal 42.20px/42.20px 'Liberation Serif';color:#111;letter-spacing:0.55px;width:200px;text-align:center;line-height:48.49px">24516</span>
<span class="t" style="left:654.50px;top:680.26px;font:normal normal 42.20px/42.20px 'Liberation Serif';color:#111;letter-spacing:0.55px;width:200px;text-align:center;line-height:48.49px">82269</span>
<span class="t" style="left:29.30px;top:734.26px;font:normal normal 42.20px/42.20px 'Liberation Serif';color:#111;letter-spacing:0.55px;width:200px;text-align:center;line-height:48.49px">5</span>
<span class="t" style="left:254.18px;top:734.26px;font:normal normal 42.20px/42.20px 'Liberation Serif';color:#111;letter-spacing:0.55px;line-height:48.49px">5</span>
<span class="t zf" style="left:277.12px;top:733.05px;font-size:42.00px;line-height:42.00px;font-weight:400;color:#111;transform:scale(0.931,1);transform-origin:0 0">月</span>
<span class="t" style="left:407.80px;top:734.26px;font:normal normal 42.20px/42.20px 'Liberation Serif';color:#111;letter-spacing:0.55px;width:200px;text-align:center;line-height:48.49px">16925</span>
<span class="t" style="left:654.50px;top:734.26px;font:normal normal 42.20px/42.20px 'Liberation Serif';color:#111;letter-spacing:0.55px;width:200px;text-align:center;line-height:48.49px">99194</span>
<span class="t" style="left:29.30px;top:788.26px;font:normal normal 42.20px/42.20px 'Liberation Serif';color:#111;letter-spacing:0.55px;width:200px;text-align:center;line-height:48.49px">6</span>
<span class="t" style="left:254.18px;top:788.26px;font:normal normal 42.20px/42.20px 'Liberation Serif';color:#111;letter-spacing:0.55px;line-height:48.49px">6</span>
<span class="t zf" style="left:277.12px;top:787.05px;font-size:42.00px;line-height:42.00px;font-weight:400;color:#111;transform:scale(0.931,1);transform-origin:0 0">月</span>
<span class="t" style="left:407.80px;top:788.26px;font:normal normal 42.20px/42.20px 'Liberation Serif';color:#111;letter-spacing:0.55px;width:200px;text-align:center;line-height:48.49px">19330</span>
<span class="t" style="left:654.50px;top:788.26px;font:normal normal 42.20px/42.20px 'Liberation Serif';color:#111;letter-spacing:0.55px;width:200px;text-align:center;line-height:48.49px">118524</span>
<span class="t" style="left:29.30px;top:842.26px;font:normal normal 42.20px/42.20px 'Liberation Serif';color:#111;letter-spacing:0.55px;width:200px;text-align:center;line-height:48.49px">7</span>
<span class="t" style="left:254.18px;top:842.26px;font:normal normal 42.20px/42.20px 'Liberation Serif';color:#111;letter-spacing:0.55px;line-height:48.49px">7</span>
<span class="t zf" style="left:277.12px;top:841.05px;font-size:42.00px;line-height:42.00px;font-weight:400;color:#111;transform:scale(0.931,1);transform-origin:0 0">月</span>
<span class="t" style="left:407.80px;top:842.26px;font:normal normal 42.20px/42.20px 'Liberation Serif';color:#111;letter-spacing:0.55px;width:200px;text-align:center;line-height:48.49px">19081</span>
<span class="t" style="left:654.50px;top:842.26px;font:normal normal 42.20px/42.20px 'Liberation Serif';color:#111;letter-spacing:0.55px;width:200px;text-align:center;line-height:48.49px">137605</span>
<span class="t" style="left:29.30px;top:896.26px;font:normal normal 42.20px/42.20px 'Liberation Serif';color:#111;letter-spacing:0.55px;width:200px;text-align:center;line-height:48.49px">8</span>
<span class="t" style="left:254.18px;top:896.26px;font:normal normal 42.20px/42.20px 'Liberation Serif';color:#111;letter-spacing:0.55px;line-height:48.49px">8</span>
<span class="t zf" style="left:277.12px;top:895.05px;font-size:42.00px;line-height:42.00px;font-weight:400;color:#111;transform:scale(0.931,1);transform-origin:0 0">月</span>
<span class="t" style="left:407.80px;top:896.26px;font:normal normal 42.20px/42.20px 'Liberation Serif';color:#111;letter-spacing:0.55px;width:200px;text-align:center;line-height:48.49px">22534</span>
<span class="t" style="left:654.50px;top:896.26px;font:normal normal 42.20px/42.20px 'Liberation Serif';color:#111;letter-spacing:0.55px;width:200px;text-align:center;line-height:48.49px">160139</span>
<span class="t" style="left:29.30px;top:950.26px;font:normal normal 42.20px/42.20px 'Liberation Serif';color:#111;letter-spacing:0.55px;width:200px;text-align:center;line-height:48.49px">9</span>
<span class="t" style="left:254.18px;top:950.26px;font:normal normal 42.20px/42.20px 'Liberation Serif';color:#111;letter-spacing:0.55px;line-height:48.49px">9</span>
<span class="t zf" style="left:277.12px;top:949.05px;font-size:42.00px;line-height:42.00px;font-weight:400;color:#111;transform:scale(0.931,1);transform-origin:0 0">月</span>
<span class="t" style="left:407.80px;top:950.26px;font:normal normal 42.20px/42.20px 'Liberation Serif';color:#111;letter-spacing:0.55px;width:200px;text-align:center;line-height:48.49px">23389</span>
<span class="t" style="left:654.50px;top:950.26px;font:normal normal 42.20px/42.20px 'Liberation Serif';color:#111;letter-spacing:0.55px;width:200px;text-align:center;line-height:48.49px">183528</span>
<span class="t" style="left:29.30px;top:1004.26px;font:normal normal 42.20px/42.20px 'Liberation Serif';color:#111;letter-spacing:0.55px;width:200px;text-align:center;line-height:48.49px">10</span>
<span class="t" style="left:243.35px;top:1004.26px;font:normal normal 42.20px/42.20px 'Liberation Serif';color:#111;letter-spacing:0.55px;line-height:48.49px">10</span>
<span class="t zf" style="left:287.95px;top:1003.05px;font-size:42.00px;line-height:42.00px;font-weight:400;color:#111;transform:scale(0.931,1);transform-origin:0 0">月</span>
<span class="t" style="left:407.80px;top:1004.26px;font:normal normal 42.20px/42.20px 'Liberation Serif';color:#111;letter-spacing:0.55px;width:200px;text-align:center;line-height:48.49px">14783</span>
<span class="t" style="left:654.50px;top:1004.26px;font:normal normal 42.20px/42.20px 'Liberation Serif';color:#111;letter-spacing:0.55px;width:200px;text-align:center;line-height:48.49px">198311</span>
<span class="t" style="left:29.30px;top:1058.26px;font:normal normal 42.20px/42.20px 'Liberation Serif';color:#111;letter-spacing:0.55px;width:200px;text-align:center;line-height:48.49px">11</span>
<span class="t" style="left:243.35px;top:1058.26px;font:normal normal 42.20px/42.20px 'Liberation Serif';color:#111;letter-spacing:0.55px;line-height:48.49px">11</span>
<span class="t zf" style="left:287.95px;top:1057.05px;font-size:42.00px;line-height:42.00px;font-weight:400;color:#111;transform:scale(0.931,1);transform-origin:0 0">月</span>
<span class="t" style="left:407.80px;top:1058.26px;font:normal normal 42.20px/42.20px 'Liberation Serif';color:#111;letter-spacing:0.55px;width:200px;text-align:center;line-height:48.49px">20312</span>
<span class="t" style="left:654.50px;top:1058.26px;font:normal normal 42.20px/42.20px 'Liberation Serif';color:#111;letter-spacing:0.55px;width:200px;text-align:center;line-height:48.49px">218623</span>
<span class="t" style="left:29.30px;top:1112.26px;font:normal normal 42.20px/42.20px 'Liberation Serif';color:#111;letter-spacing:0.55px;width:200px;text-align:center;line-height:48.49px">12</span>
<span class="t" style="left:243.35px;top:1112.26px;font:normal normal 42.20px/42.20px 'Liberation Serif';color:#111;letter-spacing:0.55px;line-height:48.49px">12</span>
<span class="t zf" style="left:287.95px;top:1111.05px;font-size:42.00px;line-height:42.00px;font-weight:400;color:#111;transform:scale(0.931,1);transform-origin:0 0">月</span>
<span class="t" style="left:407.80px;top:1112.26px;font:normal normal 42.20px/42.20px 'Liberation Serif';color:#111;letter-spacing:0.55px;width:200px;text-align:center;line-height:48.49px">20275</span>
<span class="t" style="left:654.50px;top:1112.26px;font:normal normal 42.20px/42.20px 'Liberation Serif';color:#111;letter-spacing:0.55px;width:200px;text-align:center;line-height:48.49px">238898</span>
<!-- selection -->
<div class="b" style="left:640.30px;top:508.00px;width:223.70px;height:653.00px;background:transparent;box-sizing:border-box;border:3.500px solid #1b5e42"></div>
<div class="b" style="left:853.20px;top:1157.30px;width:11.50px;height:4.20px;background:#fff;"></div>
<div class="b" style="left:859.30px;top:1150.80px;width:5.40px;height:10.50px;background:#fff;"></div>
<div class="b" style="left:855.00px;top:1152.70px;width:11.40px;height:11.30px;background:#fff;"></div>
<div class="b" style="left:856.00px;top:1153.70px;width:9.40px;height:9.30px;background:#1f7145;"></div>
<svg class="ic" style="left:864.00px;top:1162.00px;width:40.00px;height:40.00px;" viewBox="0 0 40 40"><rect x="0.700" y="0.700" width="38.300" height="38.300" fill="#fff" stroke="#a6a6a6" stroke-width="1.300"/><rect x="6.300" y="6.500" width="12.700" height="8.300" fill="#3c7dde"/><rect x="19" y="6.500" width="12.300" height="8.300" fill="#fff" stroke="#666" stroke-width="1.300"/><rect x="6.300" y="14.800" width="12.700" height="8" fill="#fff" stroke="#666" stroke-width="1.300"/><path d="M6.500 27H20.500M6.500 31H20.500" stroke="#777" stroke-width="1.500" stroke-dasharray="1.500 2.300"/><path d="M24.500 27.200H33.500M29 22.700V31.700" stroke="#666" stroke-width="1.500"/></svg>
<div class="b" style="left:630.00px;top:498.00px;width:242.00px;height:670.00px;background:transparent;box-sizing:border-box;border:4px solid #d32030;border-top-color:#e2281f;border-bottom-color:#e2281f"></div>
<svg class="ic" style="left:860.00px;top:660.00px;width:164.00px;height:240.00px;" viewBox="0 0 164 240"><path d="M124.500 20L126.700 21.500L43.300 190.800L54.100 192.700L18 220.200L22.400 175.600L28.500 183.700Z" fill="#e8222b"/></svg>
<!-- credit -->
<span class="t zs" style="left:791.80px;top:1214.10px;font-size:25.00px;line-height:25.00px;font-weight:500;color:#fff;text-shadow:1.600px 1.600px 0 #000,0.800px 0.800px 0 #000,0 1.400px 0 #222,1.400px 0 0 #222,-0.500px -0.500px 0 #555">头条</span>
<span class="t zs" style="left:878.50px;top:1213.90px;font-size:25.50px;line-height:25.50px;font-weight:500;color:#fff;text-shadow:1.600px 1.600px 0 #000,0.800px 0.800px 0 #000,0 1.400px 0 #222,1.400px 0 0 #222,-0.500px -0.500px 0 #555">无非</span>
<span class="t" style="left:849.80px;top:1214.80px;font:normal normal 27.00px/27.00px 'Liberation Sans';color:#fff;letter-spacing:0.00px;text-shadow:1.600px 1.600px 0 #000,0.800px 0.800px 0 #000,0 1.400px 0 #222,1.400px 0 0 #222,-0.500px -0.500px 0 #555">@</span>
<span class="t" style="left:930.50px;top:1214.50px;font:normal normal 28.00px/28.00px 'Liberation Sans';color:#fff;letter-spacing:0.00px;text-shadow:1.600px 1.600px 0 #000,0.800px 0.800px 0 #000,0 1.400px 0 #222,1.400px 0 0 #222,-0.500px -0.500px 0 #555">Excel</span>
</div>
</body></html>
